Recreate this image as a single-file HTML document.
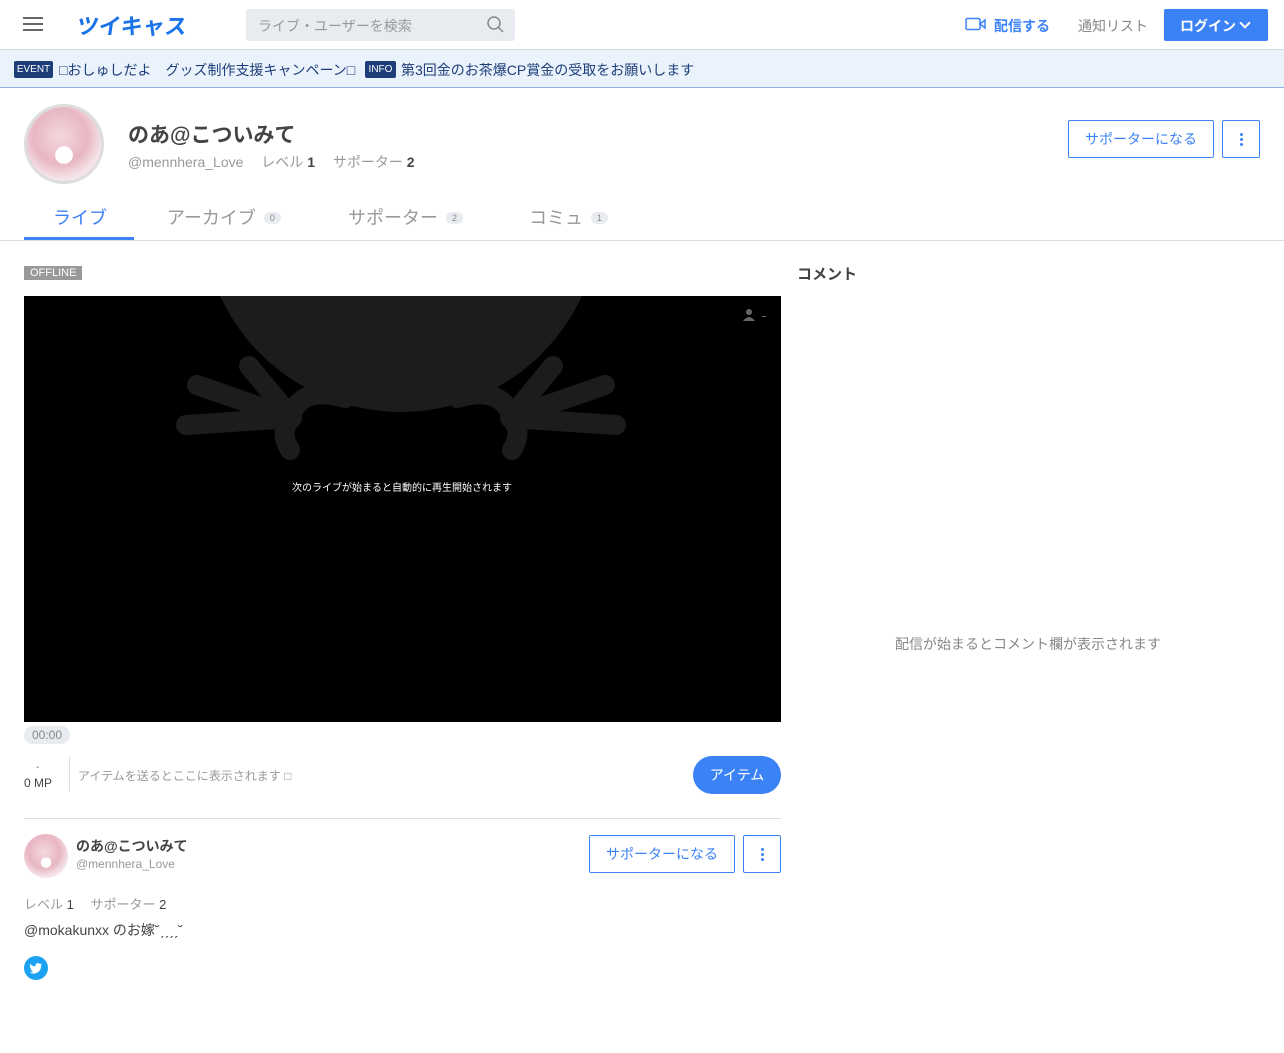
<!DOCTYPE html>
<html><head><meta charset="utf-8"><style>
*{box-sizing:border-box;margin:0;padding:0}
body{width:1284px;height:1053px;background:#fff;font-family:"Liberation Sans","Noto Sans CJK JP",sans-serif;color:#333;position:relative;overflow:hidden}
.a{position:absolute;white-space:nowrap}
.btn-o{position:absolute;border:1px solid #3b82f6;border-radius:2px;color:#3b82f6;font-size:14px;display:flex;align-items:center;justify-content:center;background:#fff}
.dots{flex-direction:column;gap:2px}
.dots i{display:block;width:3px;height:3px;border-radius:50%;background:#3b82f6}
.badge{display:inline-block;background:#e8ebf0;color:#888;font-size:9px;border-radius:8px;padding:1px 6px;vertical-align:3px;margin-left:8px}
.av{border-radius:50%;background:radial-gradient(circle at 50% 65%,#fff 0 14%,transparent 15%),radial-gradient(circle at 45% 40%,#f3d9df,#e8b6c3 45%,#f4e4e8 70%)}
</style></head><body>
<div class="a" style="left:23px;top:17px;width:20px;height:2px;background:#666;box-shadow:0 6px 0 #666,0 12px 0 #666"></div>
<div class="a" style="left:77px;top:9px;font-size:22px;font-weight:bold;color:#1a73e8;letter-spacing:0px;transform:skewX(-8deg)">ツイキャス</div>
<div class="a" style="left:246px;top:9px;width:269px;height:32px;background:#e8ebf0;border-radius:3px"></div>
<div class="a" style="left:258px;top:16px;font-size:14px;color:#999">ライブ・ユーザーを検索</div>
<svg class="a" style="left:486px;top:15px" width="20" height="20" viewBox="0 0 20 20"><circle cx="8" cy="8" r="6" fill="none" stroke="#888" stroke-width="1.5"/><path d="M12.5 12.5L17 17" stroke="#888" stroke-width="1.5"/></svg>
<svg class="a" style="left:965px;top:17px" width="22" height="14" viewBox="0 0 22 14"><rect x="1" y="1.5" width="14" height="11" rx="1.5" fill="none" stroke="#3b82f6" stroke-width="1.5"/><path d="M15 7L20 3V11Z" fill="none" stroke="#3b82f6" stroke-width="1.5"/></svg>
<div class="a" style="left:994px;top:16px;font-size:14px;color:#3b82f6;font-weight:bold">配信する</div>
<div class="a" style="left:1078px;top:16px;font-size:14px;color:#888">通知リスト</div>
<div class="a" style="left:1164px;top:9px;width:104px;height:32px;background:#3b82f6;border-radius:2px;color:#fff;font-size:14px;font-weight:bold;padding:7px 0 0 16px">ログイン <span style="display:inline-block;width:8px;height:8px;border-right:2px solid #fff;border-bottom:2px solid #fff;transform:rotate(45deg);vertical-align:4px;margin-left:1px"></span></div>
<div class="a" style="left:0;top:49px;width:1284px;height:39px;background:#eaf2fc;border-top:1px solid #d5dbe3;border-bottom:1px solid #8fb4dd"></div>
<div class="a" style="left:14px;top:61px;width:39px;height:17px;background:#1d3e78;color:#fff;font-size:10px;line-height:17px;text-align:center;border-radius:2px">EVENT</div>
<div class="a" style="left:59px;top:60px;font-size:14px;color:#1d3e78">□おしゅしだよ　グッズ制作支援キャンペーン□</div>
<div class="a" style="left:365px;top:61px;width:31px;height:17px;background:#1d3e78;color:#fff;font-size:10px;line-height:17px;text-align:center;border-radius:2px">INFO</div>
<div class="a" style="left:401px;top:60px;font-size:14px;color:#1d3e78">第3回金のお茶爆CP賞金の受取をお願いします</div>
<div class="a av" style="left:24px;top:104px;width:80px;height:80px;border:3px solid #ddd"></div>
<div class="a" style="left:128px;top:119px;font-size:21px;font-weight:bold;color:#444">のあ@こついみて</div>
<div class="a" style="left:128px;top:152px;font-size:14px;color:#999">@mennhera_Love　 レベル <b style="color:#444">1</b>　 サポーター <b style="color:#444">2</b></div>
<div class="btn-o" style="left:1068px;top:120px;width:146px;height:38px">サポーターになる</div>
<div class="btn-o dots" style="left:1222px;top:120px;width:38px;height:38px"><i></i><i></i><i></i></div>
<div class="a" style="left:53px;top:204px;font-size:18px;color:#3b82f6">ライブ</div>
<div class="a" style="left:24px;top:237px;width:110px;height:4px;background:#3b82f6"></div>
<div class="a" style="left:167px;top:204px;font-size:18px;color:#999">アーカイブ<span class="badge">0</span></div>
<div class="a" style="left:348px;top:204px;font-size:18px;color:#999">サポーター<span class="badge">2</span></div>
<div class="a" style="left:529px;top:204px;font-size:18px;color:#999">コミュ<span class="badge">1</span></div>
<div class="a" style="left:0;top:240px;width:1284px;height:1px;background:#ddd"></div>
<div class="a" style="left:24px;top:266px;background:#999;color:#fff;font-size:11px;padding:1px 6px">OFFLINE</div>
<div class="a" style="left:797px;top:263px;font-size:15px;font-weight:bold;color:#444">コメント</div>
<svg class="a" style="left:24px;top:296px" width="757" height="426" viewBox="0 0 757 426">
<rect width="757" height="426" fill="#000"/>
<circle cx="377" cy="-83" r="199" fill="#1c1c1c"/>
<g transform="translate(-24,-296)" stroke="#1c1c1c" stroke-width="20" stroke-linecap="round" stroke-linejoin="round" fill="none">
<path d="M290 450Q278 430 292 418L186 425M292 418L197 385M292 418L249 366"/>
<path d="M290 418Q300 385 345 398"/>
<path d="M512 450Q524 430 510 418L616 425M510 418L605 385M510 418L553 366"/>
<path d="M512 418Q502 385 457 398"/>
</g>
<circle cx="725" cy="16" r="3" fill="#666"/><path d="M719 25Q725 17 731 25Z" fill="#666"/><rect x="738" y="20" width="4" height="1" fill="#666"/>
<text x="378" y="195" fill="#fff" font-size="10" text-anchor="middle" font-family="Liberation Sans,Noto Sans CJK JP,sans-serif">次のライブが始まると自動的に再生開始されます</text>
</svg>
<div class="a" style="left:24px;top:726px;background:#e8ebf0;color:#888;font-size:12px;padding:2px 8px;border-radius:9px">00:00</div>
<div class="a" style="left:36px;top:762px;font-size:10px;color:#666">-</div>
<div class="a" style="left:24px;top:776px;font-size:12px;color:#444">0 MP</div>
<div class="a" style="left:69px;top:757px;width:1px;height:34px;background:#ddd"></div>
<div class="a" style="left:78px;top:767px;font-size:12px;color:#999">アイテムを送るとここに表示されます □</div>
<div class="a" style="left:693px;top:756px;width:88px;height:38px;background:#3b82f6;border-radius:19px;color:#fff;font-size:14px;text-align:center;line-height:38px">アイテム</div>
<div class="a" style="left:24px;top:818px;width:757px;height:1px;background:#ddd"></div>
<div class="a av" style="left:24px;top:834px;width:44px;height:44px"></div>
<div class="a" style="left:76px;top:836px;font-size:14px;font-weight:bold;color:#444">のあ@こついみて</div>
<div class="a" style="left:76px;top:857px;font-size:12px;color:#999">@mennhera_Love</div>
<div class="btn-o" style="left:589px;top:835px;width:146px;height:38px">サポーターになる</div>
<div class="btn-o dots" style="left:743px;top:835px;width:38px;height:38px"><i></i><i></i><i></i></div>
<div class="a" style="left:24px;top:894px;font-size:13px;color:#999">レベル <span style="color:#444">1</span>　 サポーター <span style="color:#444">2</span></div>
<div class="a" style="left:24px;top:920px;font-size:14px;color:#444">@mokakunxx のお嫁˘ˏˏˏˏ˘</div>
<svg class="a" style="left:24px;top:956px" width="24" height="24" viewBox="0 0 24 24"><circle cx="12" cy="12" r="12" fill="#1da1f2"/><path d="M18 8.5c-.5.2-1 .4-1.5.4.6-.3 1-.9 1.2-1.5-.5.3-1.1.5-1.7.6a2.6 2.6 0 0 0-4.5 2.4C9.3 10.3 7.4 9.3 6.2 7.7c-.7 1.2-.3 2.7.8 3.4-.4 0-.8-.1-1.2-.3 0 1.3.9 2.4 2.1 2.6-.4.1-.8.1-1.2 0 .3 1.1 1.3 1.8 2.4 1.8A5.3 5.3 0 0 1 5.5 16.3 7.4 7.4 0 0 0 17 9.7V9.4c.4-.3.8-.6 1-.9z" fill="#fff"/></svg>
<div class="a" style="left:895px;top:634px;font-size:14px;color:#888">配信が始まるとコメント欄が表示されます</div>
</body></html>
